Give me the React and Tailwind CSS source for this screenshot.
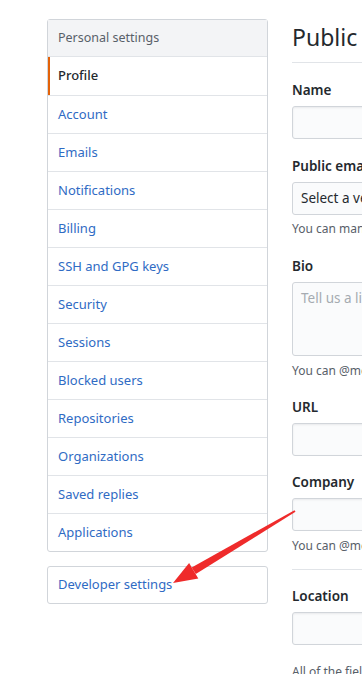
import React from "react";

const menu = [
  "Profile",
  "Account",
  "Emails",
  "Notifications",
  "Billing",
  "SSH and GPG keys",
  "Security",
  "Sessions",
  "Blocked users",
  "Repositories",
  "Organizations",
  "Saved replies",
  "Applications",
];

const Label = ({ children, className = "" }) => (
  <div className={`text-[13.5px] leading-5 font-semibold text-[#24292e] ${className}`}>
    {children}
  </div>
);

const Input = ({ className = "" }) => (
  <div
    className={`h-[33px] w-[420px] rounded-[3px] border border-[#d1d5da] bg-[#fafbfc] shadow-[inset_0_1px_2px_rgba(27,31,35,0.075)] ${className}`}
  />
);

const Note = ({ children, className = "" }) => (
  <p className={`text-[12px] leading-[18px] text-[#586069] whitespace-nowrap ${className}`}>
    {children}
  </p>
);

export default function App() {
  return (
    <div
      className="relative w-[362px] h-[674px] overflow-hidden bg-white"
      style={{ fontFamily: '"Noto Sans", "Open Sans", sans-serif' }}
    >
      <div className="flex gap-[24px] pl-[47px] pt-[19px]">
        {/* sidebar */}
        <div className="w-[221px] shrink-0">
          <nav className="rounded-[3px] border border-[#d1d5da] text-[13px]">
            <div className="h-[37px] flex items-center px-[10px] bg-[#f3f4f6] text-[12.5px] text-[#586069] border-b border-[#e1e4e8]">
              Personal settings
            </div>
            {menu.map((item, i) => (
              <div
                key={item}
                className={`h-[38px] flex items-center ${
                  i > 0 ? "border-t border-[#e1e4e8]" : ""
                } ${
                  i === 0
                    ? "border-l-2 border-l-[#e36209] pl-[8px] text-[#24292e] font-medium"
                    : "pl-[10px] text-[#2f6bc4]"
                }`}
              >
                {item}
              </div>
            ))}
          </nav>
          <div className="mt-[14px] h-[38px] flex items-center px-[10px] rounded-[3px] border border-[#d1d5da] text-[13px] text-[#2f6bc4]">
            Developer settings
          </div>
        </div>

        {/* main */}
        <div className="shrink-0 w-[440px]">
          <div className="border-b border-[#e1e4e8] pt-[3px] pb-[9px]">
            <h2 className="text-[23px] leading-[31px] text-[#24292e] whitespace-nowrap">
              Public profile
            </h2>
          </div>

          <Label className="mt-[17px]">Name</Label>
          <Input className="mt-[6px]" />

          <Label className="mt-[17px]">Public email</Label>
          <div className="mt-[6px] h-[33px] w-[420px] rounded-[3px] border border-[#d1d5da] bg-[#fafbfc] flex items-center px-[8px] text-[13.5px] text-[#24292e] whitespace-nowrap">
            Select a verified email to display
          </div>
          <Note className="mt-[5px]">
            You can manage verified email addresses in your email settings.
          </Note>

          <Label className="mt-[18px]">Bio</Label>
          <div className="mt-[6px] h-[74px] w-[420px] rounded-[3px] border border-[#d1d5da] bg-[#fafbfc] px-[8px] pt-[5px] text-[13.5px] text-[#a5abb1] whitespace-nowrap">
            Tell us a little bit about yourself
          </div>
          <Note className="mt-[6px]">
            You can @mention other users and organizations to link to them.
          </Note>

          <Label className="mt-[17px]">URL</Label>
          <Input className="mt-[6px]" />

          <Label className="mt-[16px]">Company</Label>
          <Input className="mt-[6px]" />
          <Note className="mt-[6px]">
            You can @mention your company's GitHub organization to link it.
          </Note>

          <div className="mt-[14px] border-t border-[#e1e4e8]" />

          <Label className="mt-[16px]">Location</Label>
          <Input className="mt-[6px]" />

          <Note className="mt-[18px]">
            All of the fields on this page are optional and can be deleted at any time.
          </Note>
        </div>
      </div>

      {/* red annotation arrow */}
      <svg
        className="absolute left-0 top-0 pointer-events-none"
        width="362"
        height="674"
        viewBox="0 0 362 674"
      >
        <polygon
          points="295.5,511.8 294.5,510.2 191.7,567.4 195.8,574.1"
          fill="#ef2b2b"
        />
        <polygon points="173,583 198.3,578.5 189.1,563.0" fill="#ef2b2b" />
      </svg>
    </div>
  );
}
